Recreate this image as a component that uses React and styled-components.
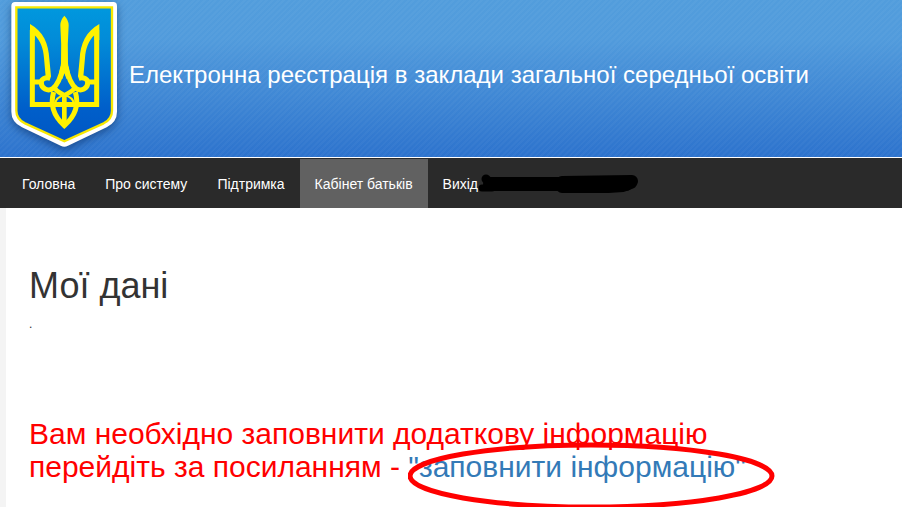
import React from "react";
import styled, { createGlobalStyle } from "styled-components";

const GlobalStyle = createGlobalStyle`
  * {
    box-sizing: border-box;
  }

  body {
    margin: 0;
    background: #f4f4f4;
    color: #333;
    font-family: "Liberation Sans", Arial, sans-serif;
    font-size: 14px;
    line-height: 20px;
  }
`;

const menu = [
  { title: "Головна" },
  { title: "Про систему" },
  { title: "Підтримка" },
  { title: "Кабінет батьків", active: true },
  { title: "Вихід", covered: true },
];

const Emblem = () => (
  <EmblemSvg viewBox="0 0 381 471" role="img" aria-label="Герб України">
    <defs>
      <linearGradient id="shield" x1="0" y1="0" x2="0" y2="1">
        <stop offset="0" stopColor="#0098de" />
        <stop offset="0.25" stopColor="#028bd8" />
        <stop offset="0.75" stopColor="#005fca" />
        <stop offset="1" stopColor="#0057c4" />
      </linearGradient>
    </defs>
    <path
      fill="#fff"
      d="M45 6H340Q351 6 351 18V335Q351 366 320 382L204 437Q193 443 182 437L66 382Q34 366 34 335V18Q34 6 45 6Z"
    />
    <path
      fill="url(#shield)"
      stroke="#f7e800"
      strokeWidth="7"
      d="M49 22H336V332Q336 357 311 370L193 424L75 370Q49 357 49 332Z"
    />
    <g fill="none" stroke="#fff200" strokeWidth="15">
      <path d="M97 90V313.500H290V90" />
      <path d="M97 246H122M290 246H265" />
      <path d="M151 235C136 230 124 237 124 248C124 266 143 275 158 266C175 252 184 225 189 200" />
      <path d="M236 235C251 230 263 237 263 248C263 266 244 275 229 266C212 252 203 225 198 200" />
      <path d="M162 262C170 276 184 280 193 286C203 280 217 276 225 262" strokeWidth="14" />
      <path d="M164 313C167 298 178 289 193 286C209 289 220 298 223 313" strokeWidth="6" />
      <path d="M161 276C150 313 160 347 193 377C227 347 237 313 226 276" />
      <path d="M193 285V375" strokeWidth="14" />
    </g>
    <g fill="#fff200">
      <path d="M90 72C130 94 146 132 148 177L153 228L137 230L132 174C130 145 121 122 104 106V120H90Z" />
      <path d="M298 72C258 94 241 132 239 177L234 228L250 230L255 174C257 145 266 122 283 106V120H298Z" />
      <path d="M193 47Q206 60 206 76Q202 130 204 190Q205 205 210 220L200 238L193 220L187 238L177 220Q182 205 183 190Q185 130 181 76Q181 60 193 47Z" />
    </g>
  </EmblemSvg>
);

const Scribble = () => (
  <ScribbleSvg viewBox="0 0 162 22" aria-hidden="true">
    <g
      fill="none"
      stroke="#000"
      strokeLinecap="round"
      strokeLinejoin="round"
    >
      <path strokeWidth="9" d="M8 6L9 7" />
      <path strokeWidth="14" d="M12 11L80 11L148 11" />
      <path strokeWidth="7" d="M4 15L14 15" />
      <path strokeWidth="12" d="M84 9L154 8L153 10L145 13L130 14L84 14" />
    </g>
  </ScribbleSvg>
);

const App = () => {
  return (
    <Page>
      <GlobalStyle />
      <Header>
        <Emblem />
        <SiteTitle>
          Електронна реєстрація в заклади загальної середньої освіти
        </SiteTitle>
      </Header>
      <Nav>
        {menu.map(({ title, active, covered }) => (
          <NavLink
            key={title}
            href="#"
            $active={active}
            aria-current={active ? "page" : undefined}
          >
            {title}
            {covered && <Scribble />}
          </NavLink>
        ))}
      </Nav>
      <Main>
        <Heading>Мої дані</Heading>
        <Dot>.</Dot>
        <Notice>
          Вам необхідно заповнити додаткову інформацію
          <br />
          перейдіть за посиланням -{" "}
          <FillLink href="#">
            "заповнити інформацію"
            <Ring viewBox="0 0 368 68" aria-hidden="true">
              <ellipse cx="183" cy="34" rx="181" ry="31" />
            </Ring>
          </FillLink>
        </Notice>
      </Main>
    </Page>
  );
};

const Page = styled.div`
  display: flex;
  flex-direction: column;
  min-height: 100vh;
  overflow: hidden;
`;

const Header = styled.header`
  display: flex;
  align-items: center;
  gap: 2px;
  border-bottom: 1px solid #fff;
  background:
    repeating-linear-gradient(
      135deg,
      rgba(255, 255, 255, 0.03) 0 2px,
      transparent 2px 4px
    ),
    linear-gradient(#529ddc 0%, #519bdc 25%, #2d73cd 100%);
`;

const EmblemSvg = styled.svg`
  flex: none;
  width: 127px;
  height: 157px;
  filter: drop-shadow(0 3px 4px rgba(0, 30, 80, 0.5));
`;

const SiteTitle = styled.div`
  color: #fff;
  font-size: 24px;
  line-height: 28px;
  padding-bottom: 8px;
`;

const Nav = styled.nav`
  display: flex;
  padding: 1px 7px 0;
  background: #2a2a2a;
`;

const NavLink = styled.a`
  display: flex;
  align-items: center;
  padding: 15px 15px 14px;
  color: #fff;
  text-decoration: none;
  white-space: nowrap;
  background: ${({ $active }) => ($active ? "#616161" : "transparent")};
`;

const ScribbleSvg = styled.svg`
  width: 162px;
  height: 22px;
  margin: -1px 0;
`;

const Main = styled.main`
  flex: 1;
  margin-left: 6px;
  padding: 58px 23px 0;
  background: #fff;
`;

const Heading = styled.h1`
  margin: 0;
  font-size: 36px;
  font-weight: 400;
  line-height: 40px;
`;

const Dot = styled.p`
  margin: 8px 0 83px;
  font-size: 12px;
`;

const Notice = styled.h2`
  margin: 0;
  color: #f00;
  font-size: 30px;
  font-weight: 400;
  line-height: 33px;
`;

const FillLink = styled.a`
  position: relative;
  display: inline-block;
  color: #337ab7;
  text-decoration: none;
`;

const Ring = styled.svg`
  position: absolute;
  top: -8px;
  left: 0;
  width: 368px;
  height: 68px;
  fill: none;
  stroke: #f00;
  stroke-width: 5px;
  pointer-events: none;
`;

export default App;
